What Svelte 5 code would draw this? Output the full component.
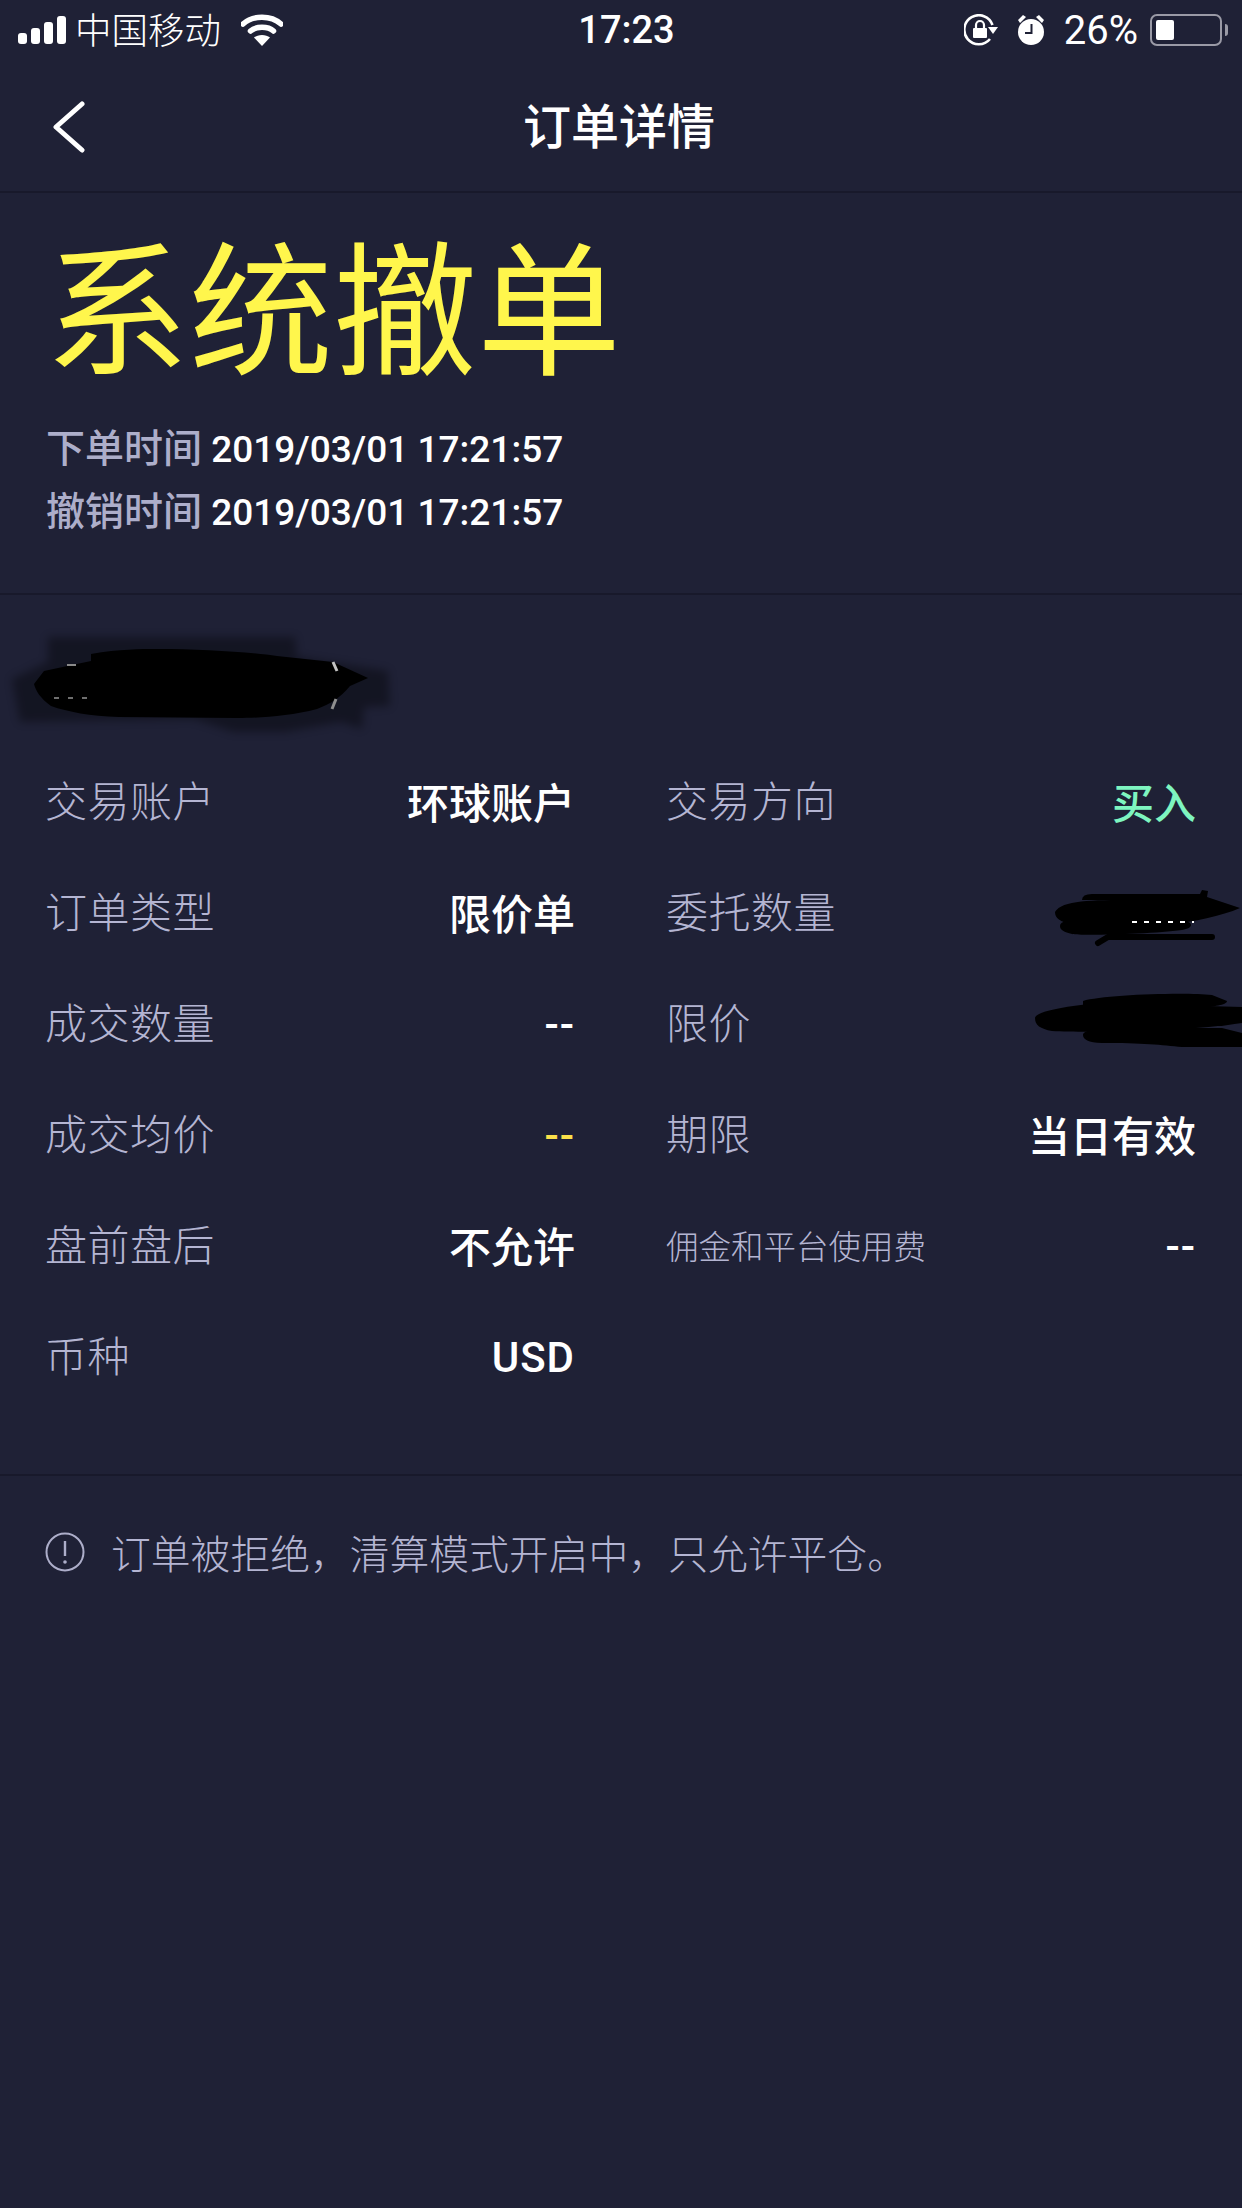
<script>
  const rows = [
    { k: '交易账户', v: '环球账户', k2: '交易方向', v2: '买入', c2: 'green' },
    { k: '订单类型', v: '限价单', k2: '委托数量', mark: 'qty' },
    { k: '成交数量', v: '--', k2: '限价', mark: 'price' },
    { k: '成交均价', v: '--', c: 'yellow', k2: '期限', v2: '当日有效' },
    { k: '盘前盘后', v: '不允许', k2: '佣金和平台使用费', small: true, v2: '--' },
    { k: '币种', v: 'USD' }
  ]

  function isLatin (text) {
    return /^[A-Za-z-]+$/.test(text)
  }
</script>

<div class="page">
  <div class="status">
    <div class="status-left">
      <svg width="48" height="28" viewBox="0 0 48 28">
        <rect x="0" y="17" width="9" height="11" rx="3" fill="#fff" />
        <rect x="13" y="12" width="9" height="16" rx="3" fill="#fff" />
        <rect x="26" y="6" width="9" height="22" rx="3" fill="#fff" />
        <rect x="39" y="0" width="9" height="28" rx="3" fill="#fff" />
      </svg>
      <span class="carrier">中国移动</span>
      <svg class="wifi" width="42" height="32" viewBox="0 0 42 32">
        <path d="M2 10 C12 1 30 1 40 10" fill="none" stroke="#fff" stroke-width="5.5" stroke-linecap="round" />
        <path d="M9.500 17 C15 12 27 12 32.500 17" fill="none" stroke="#fff" stroke-width="5.500" stroke-linecap="round" />
        <path d="M21 32 L13 23.500 C17 20 25 20 29 23.500 Z" fill="#fff" />
      </svg>
    </div>
    <span class="clock">17:23</span>
    <div class="status-right">
      <svg class="lock" width="34" height="32" viewBox="0 0 34 32">
        <path d="M26 25 A14.500 14.500 0 1 1 28.500 11" fill="none" stroke="#fff" stroke-width="2.600" />
        <path d="M24 13 L34 13 L29 20 Z" fill="#fff" />
        <rect x="9" y="14" width="14" height="10" rx="1" fill="#fff" />
        <path d="M12 14 V11 A4 4 0 0 1 20 11 V14" fill="none" stroke="#fff" stroke-width="2.200" />
      </svg>
      <svg class="alarm" width="30" height="32" viewBox="0 0 28 32">
        <circle cx="14" cy="18" r="13" fill="#fff" />
        <path d="M14.500 10 V19 H8" fill="none" stroke="#1f2136" stroke-width="2" />
        <path d="M1 6 L6 1 L9 3 L3 9 Z M27 6 L22 1 L19 3 L25 9 Z" fill="#fff" />
      </svg>
      <span class="pct">26%</span>
      <div class="battery"><div class="level"></div></div>
      <div class="nub"></div>
    </div>
  </div>

  <div class="nav">
    <svg class="back" width="34" height="52" viewBox="0 0 34 52">
      <path d="M30 3 L4 26 L30 49" fill="none" stroke="#fff" stroke-width="5" stroke-linecap="round" stroke-linejoin="round" />
    </svg>
    <h1>订单详情</h1>
  </div>

  <div class="head">
    <div class="state">系统撤单</div>
    <p><span>下单时间</span> 2019/03/01 17:21:57</p>
    <p><span>撤销时间</span> 2019/03/01 17:21:57</p>
  </div>

  <div class="detail">
    <svg class="name-mark" width="380" height="100" viewBox="0 0 380 100">
      <path class="haze" d="M38 1 H285 L287 21 L378 35 L380 70 L354 71 L352 93 L331 86 L275 96 H224 L184 83 L10 86 L2 43 L38 26 Z" />
      <path d="M81 18 C110 13 130 13 148 13 C190 13 240 16 267 20 L323 26 L358 42 L340 50 C330 62 320 68 307 73 C280 80 250 82 228 82 L109 81 C80 80 58 76 41 70 C30 62 26 55 24 48 L34 35 L81 25 Z" fill="#000" />
      <path d="M57 29 H66" stroke="#8a8a8a" stroke-width="2" />
      <path d="M44 62 H80" stroke="#6f6f6f" stroke-width="2" stroke-dasharray="5 9" />
      <path d="M323 26 L327 35" stroke="#c4c4c4" stroke-width="3" />
      <path d="M326 63 L322 73" stroke="#8f8f8f" stroke-width="3" />
    </svg>

    <div class="grid">
      {#each rows as r}
        <div class="cell">
          <span class="key">{r.k}</span>
          <span class="val {r.c || ''}" class:latin={isLatin(r.v)}>{r.v}</span>
        </div>
        <div class="cell">
          {#if r.k2}
            <span class="key" class:small={r.small}>{r.k2}</span>
            {#if r.mark === 'qty'}
              <svg class="mark qty" width="190" height="54" viewBox="0 0 190 54">
                <path d="M3 20 C10 8 40 8 80 8 L30 8 Q30 2 40 2 H148 L150 -2 L156 -1 L155 5 L188 16 C170 24 140 30 120 32 H20 C8 30 3 26 3 20 Z" fill="#000" />
                <path d="M8 34 C8 26 30 28 60 28 H130 C142 30 142 36 130 38 C100 42 30 44 20 42 C12 40 8 38 8 34 Z" fill="#000" />
                <path d="M46 51 L56 45 H160" fill="none" stroke="#000" stroke-width="6" stroke-linecap="round" />
                <path d="M80 30 H142" stroke="#fff" stroke-width="2" stroke-dasharray="5 7" />
              </svg>
            {:else if r.mark === 'price'}
              <svg class="mark price" width="210" height="56" viewBox="0 0 210 56">
                <path d="M51 8 C70 2 150 -1 180 2 L195 8 C195 12 180 14 170 14 H51 Z" fill="#000" />
                <path d="M3 25 C3 18 40 12 70 10 L210 14 V30 C160 38 60 40 20 38 C8 36 3 32 3 25 Z" fill="#000" />
                <path d="M51 42 C51 36 70 35 100 35 H190 L210 40 V54 H150 C130 52 110 50 70 50 C56 50 51 46 51 42 Z" fill="#000" />
              </svg>
            {:else}
              <span class="val {r.c2 || ''}" class:latin={isLatin(r.v2)}>{r.v2}</span>
            {/if}
          {/if}
        </div>
      {/each}
    </div>
  </div>

  <div class="note">
    <svg width="40" height="40" viewBox="0 0 40 40">
      <circle cx="20" cy="20" r="18.500" fill="none" stroke="#adaeca" stroke-width="2" />
      <path d="M20 9 V24" stroke="#adaeca" stroke-width="2.400" />
      <circle cx="20" cy="30" r="1.800" fill="#adaeca" />
    </svg>
    <span>订单被拒绝，清算模式开启中，只允许平仓。</span>
  </div>
</div>

<style>
  :global(body) {
    margin: 0;
    background: #1f2136;
  }

  .page {
    width: 1242px;
    height: 2208px;
    background: #1f2136;
    color: #fff;
    font-family: "Noto Sans CJK SC", "Noto Sans", sans-serif;
    overflow: hidden;
  }

  .status {
    height: 60px;
    display: grid;
    grid-template-columns: 1fr auto 1fr;
    align-items: center;
    padding: 0 14px 0 18px;
    font-family: Roboto, "Noto Sans CJK SC", sans-serif;
    font-size: 36px;
  }
  .status-left {
    display: flex;
    align-items: center;
  }
  .carrier {
    margin: 0 0 3px 9px;
    font-family: "Noto Sans CJK SC", sans-serif;
    font-size: 36.500px;
    font-weight: 300;
    line-height: 56px;
  }
  .wifi {
    margin-left: 20px;
  }
  .clock {
    margin-left: 7px;
    font-size: 38px;
    font-weight: 500;
  }
  .status-right {
    display: flex;
    align-items: center;
    justify-content: flex-end;
  }
  .alarm {
    margin-left: 18px;
  }
  .pct {
    margin-left: 18px;
    font-size: 40px;
  }
  .battery {
    width: 72px;
    height: 32px;
    margin-left: 12px;
    padding: 4px;
    box-sizing: border-box;
    border: 2px solid #9a9aa6;
    border-radius: 7px;
  }
  .level {
    width: 18px;
    height: 100%;
    background: #fff;
    border-radius: 2px;
  }
  .nub {
    width: 3px;
    height: 12px;
    margin-left: 3px;
    background: #9a9aa6;
    border-radius: 0 3px 3px 0;
  }

  .nav {
    position: relative;
    height: 133px;
    display: flex;
    align-items: center;
    justify-content: center;
    border-bottom: 2px solid #18192b;
    box-sizing: border-box;
  }
  .back {
    position: absolute;
    left: 52px;
    top: 41px;
  }
  h1 {
    margin: 0 4px 5px 0;
    font-size: 48px;
    font-weight: 500;
    line-height: 70px;
  }

  .head {
    height: 402px;
    box-sizing: border-box;
    padding: 8px 46px 0;
    border-bottom: 2px solid #18192b;
  }
  .state {
    margin: 0 0 13px -1px;
    font-size: 144px;
    line-height: 200px;
    font-weight: 400;
    color: #fff64c;
  }
  p {
    height: 63px;
    margin: 0;
    font-family: Roboto, "Noto Sans CJK SC", sans-serif;
    font-size: 37px;
    font-weight: 500;
    line-height: 63px;
    color: #fff;
  }
  p span {
    font-family: "Noto Sans CJK SC", sans-serif;
    font-size: 39px;
    color: #adaeca;
  }

  .detail {
    height: 881px;
    box-sizing: border-box;
    padding-top: 41px;
    border-bottom: 2px solid #18192b;
  }
  .name-mark {
    display: block;
    margin-left: 10px;
    overflow: visible;
  }
  .haze {
    fill: #000;
    opacity: 0.36;
    filter: blur(4px);
  }

  .grid {
    display: grid;
    grid-template-columns: 530px 530px;
    grid-auto-rows: 111px;
    column-gap: 91px;
    margin-top: 7px;
    padding-left: 45px;
  }
  .cell {
    display: flex;
    align-items: center;
    justify-content: space-between;
    height: 111px;
  }
  .key {
    font-size: 42px;
    font-weight: 300;
    letter-spacing: 0.5px;
    color: #b4b5d2;
  }
  .key.small {
    font-size: 32.500px;
    letter-spacing: 0;
    margin-top: 3px;
  }
  .val {
    padding-top: 3px;
    font-family: Roboto, "Noto Sans CJK SC", sans-serif;
    font-size: 42px;
    font-weight: 500;
    color: #fff;
  }
  .val.latin {
    padding-top: 8px;
    letter-spacing: 1px;
  }
  .val.green {
    color: #7ef5c0;
  }
  .val.yellow {
    color: #fbe04a;
  }
  .mark {
    flex: none;
    overflow: visible;
  }
  .mark.qty {
    margin: 18px -46px 0 0;
  }
  .mark.price {
    margin-right: -46px;
  }

  .note {
    display: flex;
    align-items: center;
    gap: 26px;
    height: 151px;
    padding-left: 45px;
    color: #b4b5d2;
    font-size: 39.800px;
    font-weight: 300;
  }
</style>
